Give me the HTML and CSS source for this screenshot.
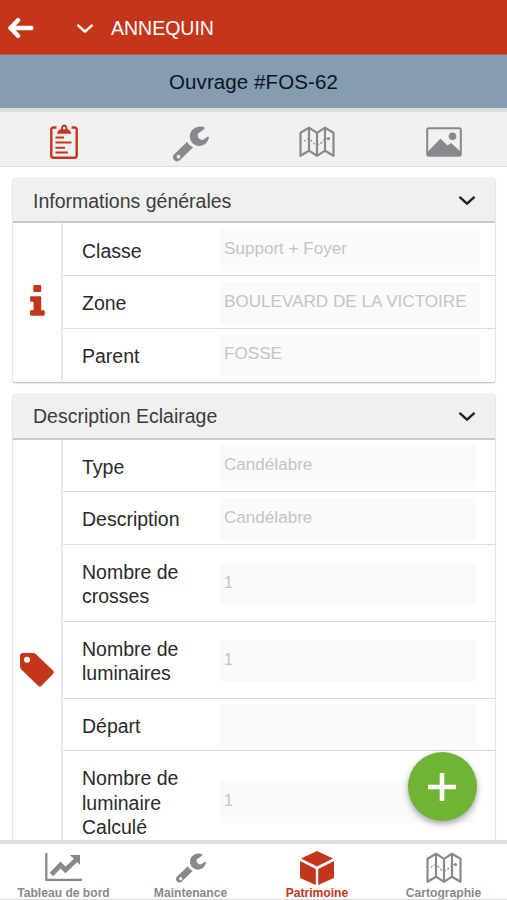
FILE: index.html
```html
<!DOCTYPE html>
<html lang="fr">
<head>
<meta charset="utf-8">
<title>Ouvrage #FOS-62</title>
<link rel="stylesheet" href="styles.css">
</head>
<body>
<svg class="defs" aria-hidden="true">
  <symbol id="chevron" viewBox="0 0 18 12"><path d="M1.5 1.800 9 8.700l7.500-6.900" fill="none" stroke="currentColor" stroke-width="2.500" stroke-linejoin="round"/></symbol>
  <symbol id="wrench" viewBox="0 0 36 36"><path fill="currentColor" fill-rule="evenodd" d="M31.500 1.200C25-1.200 16.800 2.800 16.800 10.300c0 5.500 4.200 9.700 9.700 9.700 4.500 0 8.200-3.400 9.500-8.200l-.8-1.500-5.500 3.600c-3.800-.4-5.400-2.600-4.900-6.200l6.700-4.700zM14.200 15.800 1 28.400c-1.600 1.600-1.500 4 .1 5.700s4.100 1.800 5.700.2l13.400-13c-2.800-1.100-4.900-2.900-6-5.500zM5.600 28.800a1.900 1.900 0 1 1-.1 3.800 1.900 1.900 0 0 1 .1-3.800z"/></symbol>
  <symbol id="map" viewBox="0 0 36 32"><g fill="none" stroke="currentColor"><path stroke-width="2.200" stroke-linejoin="round" d="M1.500 6.800 10 1.700l8 5.200 8-5.200 8.500 5.100v23L26 24.700l-8 5.200-8-5.200-8.500 5.100zM10 1.700v23M18 6.900v23M26 1.700v23"/><path stroke-width="1.100" stroke-dasharray="2.200 1.700" d="M5 15.500c3-4 6-3 8 0s6 4.500 9 1.500 3-4 7-4.500"/></g><circle cx="29.500" cy="12.500" r="1.600" fill="currentColor"/></symbol>
</svg>
<div class="app">
  <header class="topbar">
    <svg class="back" viewBox="0 0 26 20"><path d="M10 2.300 2.500 10l7.500 7.700M3 10h20.300" fill="none" stroke="currentColor" stroke-width="4.500" stroke-linecap="round" stroke-linejoin="round"/></svg>
    <svg class="chevron"><use href="#chevron"/></svg>
    <span>ANNEQUIN</span>
  </header>
  <h1 class="title">Ouvrage #FOS-62</h1>
  <nav class="tabs">
    <span class="tab active"><svg class="clip" viewBox="0 0 28 35"><path d="M6.500 3.500H3.600Q1.300 3.500 1.300 5.600v25.800q0 2.300 2.300 2.300h20.800q2.300 0 2.300-2.300V5.600q0-2.100-2.300-2.100h-2.900" fill="none" stroke="currentColor" stroke-width="2.400"/><path d="M7 9.800Q7.500 6 11 5.200C11-1 17.500-1 17.500 5.200 20.500 6 21 8 21.300 9.800zM14.200 2.800a1.300 1.300 0 1 0 .1 2.600 1.300 1.300 0 0 0-.1-2.600z" fill="currentColor" fill-rule="evenodd"/><path d="M5.500 13.500h8.500M5.500 18.500h16M5.500 23.700h9.500M5.500 28.400h12.500" stroke="currentColor" stroke-width="2"/></svg></span>
    <span class="tab"><svg class="wrench"><use href="#wrench"/></svg></span>
    <span class="tab"><svg class="map"><use href="#map"/></svg></span>
    <span class="tab"><svg class="photo" viewBox="0 0 36 30"><rect x="1.200" y="1.200" width="33.600" height="27.600" rx="1.500" fill="none" stroke="currentColor" stroke-width="2"/><circle cx="26.500" cy="9.200" r="3.800" fill="currentColor"/><path d="M2 24.500 14.500 11.500l7 7 3.500-2.500 9.500 8.500v4H2z" fill="currentColor"/></svg></span>
  </nav>
  <main class="content">
    <section class="card">
      <h2 class="card-head">Informations générales<svg class="chevron"><use href="#chevron"/></svg></h2>
      <div class="card-body general">
        <div class="side"><svg class="info" viewBox="0 0 15 31"><path d="M4.300 0h5.900q1 0 1 1v4.900q0 1-1 1H4.300q-1 0-1-1V1q0-1 1-1zM1.200 11.300H10.200q1 0 1 1v13h2.300q1.300 0 1.300 1.300v2.700q0 1.500-1.300 1.500H1.300Q0 30.800 0 29.300v-2.700q0-1.300 1.300-1.300h2.200v-8.500H1.200Q0 16.800 0 15.500v-2.900q0-1.300 1.200-1.300z" fill="currentColor"/></svg></div>
        <div class="rows">
          <div class="row"><span class="label">Classe</span><span class="value">Support + Foyer</span></div>
          <div class="row"><span class="label">Zone</span><span class="value">BOULEVARD DE LA VICTOIRE</span></div>
          <div class="row"><span class="label">Parent</span><span class="value">FOSSE</span></div>
        </div>
      </div>
    </section>
    <section class="card">
      <h2 class="card-head">Description Eclairage<svg class="chevron"><use href="#chevron"/></svg></h2>
      <div class="card-body lighting">
        <div class="side"><svg class="tag" viewBox="0 0 34 34"><path d="M3 0h10q1.500 0 3 1.300L33 17.500q1.600 1.700 0 3.400L21.500 32.700q-1.700 1.700-3.400 0L1.300 16.500Q0 15 0 13V3q0-3 3-3zM7 3.800a3 3 0 1 0 .1 6 3 3 0 0 0-.1-6z" fill="currentColor" fill-rule="evenodd"/></svg></div>
        <div class="rows">
          <div class="row"><span class="label">Type</span><span class="value">Candélabre</span></div>
          <div class="row"><span class="label">Description</span><span class="value">Candélabre</span></div>
          <div class="row"><span class="label">Nombre de crosses</span><span class="value number">1</span></div>
          <div class="row"><span class="label">Nombre de luminaires</span><span class="value number">1</span></div>
          <div class="row"><span class="label">Départ</span><span class="value"></span></div>
          <div class="row"><span class="label">Nombre de luminaire Calculé</span><span class="value number">1</span></div>
        </div>
      </div>
    </section>
    <button class="fab" aria-label="Ajouter"><svg viewBox="0 0 28 28"><path d="M14 0v28M0 14h28" stroke="currentColor" stroke-width="4.600"/></svg></button>
  </main>
  <nav class="bottombar">
    <span class="item"><svg class="chart" viewBox="0 0 37 29"><path d="M1.300 0v26.800H37" fill="none" stroke="currentColor" stroke-width="2.300"/><path d="M6.500 21.500 15.500 12l5 5L31 7" fill="none" stroke="currentColor" stroke-width="4.800"/><path d="M25 2H35v10z" fill="currentColor"/></svg><b>Tableau de bord</b></span>
    <span class="item"><svg class="wrench"><use href="#wrench"/></svg><b>Maintenance</b></span>
    <span class="item active"><svg class="cube" viewBox="0 0 34 34"><path d="M17 0 33 7.500 17 15.500 1 7.500zM0 10l15.800 8v16L0 27zM34 10l-15.800 8v16L34 27z" fill="currentColor"/></svg><b>Patrimoine</b></span>
    <span class="item"><svg class="map"><use href="#map"/></svg><b>Cartographie</b></span>
  </nav>
</div>
</body>
</html>
```
FILE: styles.css
```css
* { box-sizing: border-box; }
body {
  margin: 0;
  font-family: "Liberation Sans", Arial, sans-serif;
  font-size: 19.5px;
  color: #2a2a2a;
  background: #fff;
}
svg { display: block; flex: none; }
.defs { position: absolute; width: 0; height: 0; }
.app {
  height: 900px;
  display: flex;
  flex-direction: column;
  overflow: hidden;
}
.topbar {
  flex: none;
  height: 55px;
  padding: 2px 0 0 8px;
  display: flex;
  align-items: center;
  background: #c4361c;
  border-bottom: 1px solid #9c6658;
  color: #fff;
}
.back { width: 26px; height: 20px; margin-right: 41px; }
.chevron { width: 18px; height: 12px; }
.topbar .chevron { margin: 1px 17px 0 1px; }
.title {
  flex: none;
  height: 53px;
  margin: 0;
  font-size: 20.5px;
  font-weight: 400;
  line-height: 54px;
  letter-spacing: .1px;
  text-align: center;
  color: #0c151d;
  background: #869cb1;
}
.tabs {
  flex: none;
  height: 59px;
  display: grid;
  grid-template-columns: 127px 127px 126px 127px;
  background: #f1f1f1;
  border-top: 4px solid #dcdcdc;
  border-bottom: 1px solid #dedede;
  color: #88898d;
}
.tab { display: flex; justify-content: center; padding-top: 14px; }
.active { color: #c4361c; }
.clip { width: 28px; height: 35px; margin-top: -2px; }
.wrench { width: 36px; height: 36px; }
.map { width: 36px; height: 32px; }
.photo { width: 36px; height: 30px; margin-top: 1px; }
.content {
  position: relative;
  flex: 1;
  min-height: 0;
  overflow: hidden;
  padding: 11px 12px 0 13px;
}
.card {
  margin-bottom: 12px;
  border-radius: 2px;
  background: #fff;
  box-shadow: 0 1px 2px rgba(0, 0, 0, .28), 0 0 2px rgba(0, 0, 0, .12);
}
.card-head {
  height: 45px;
  margin: 0;
  padding: 3px 19px 0 20px;
  display: flex;
  align-items: center;
  justify-content: space-between;
  font-size: 19.5px;
  font-weight: 400;
  color: #3c3c3e;
  background: #f0f0f0;
  border-bottom: 2px solid #cacaca;
}
.card + .card .card-head { height: 46px; padding-top: 1px; }
.card-head .chevron { color: #222; }
.card-body { display: flex; }
.general { height: 159px; }
.general .rows { padding-top: .5px; }
.lighting { height: 460px; }
.side {
  width: 50px;
  flex: none;
  display: flex;
  align-items: center;
  justify-content: center;
  border-right: 2px solid #e8e8e8;
  color: #c4361c;
}
.info { width: 15px; height: 31px; margin-top: -4px; }
.tag { width: 34px; height: 34px; }
.rows { flex: 1; }
.lighting .rows { margin-top: -.5px; }
.row {
  display: flex;
  align-items: center;
  padding: 0 15px 0 19px;
  border-bottom: 1px solid #dcdcdc;
}
.general .row:last-child { border-bottom: 0; }
.lighting .row { padding-right: 19px; }
.label {
  width: 138px;
  flex: none;
  padding: 15px 28px 12px 0;
  line-height: 24.5px;
}
.value {
  flex: 1;
  height: 42px;
  margin-top: 2px;
  padding-left: 4px;
  font-size: 17.1px;
  line-height: 40px;
  white-space: nowrap;
  color: #c4c4c4;
  background: #fafafa;
}
.number { font-size: 16px; }
.fab {
  position: absolute;
  right: 30.5px;
  bottom: 19px;
  width: 69px;
  height: 69px;
  padding: 0;
  display: flex;
  align-items: center;
  justify-content: center;
  border: 0;
  border-radius: 50%;
  color: #fff;
  background: #70b433;
  box-shadow: 0 3px 6px rgba(0, 0, 0, .35);
}
.fab svg { width: 28px; height: 28px; }
.bottombar {
  flex: none;
  height: 60px;
  display: grid;
  grid-template-columns: 127px 127px 126px 127px;
  overflow: hidden;
  border-top: 4px solid #dedede;
  border-bottom: 1px solid #dadada;
  color: #88898d;
}
.item {
  height: 60px;
  padding-top: 2.5px;
  display: grid;
  grid-template-rows: 42px 9px;
  align-content: start;
  justify-items: center;
  align-items: center;
}
.item b { font-size: 12.1px; line-height: 9px; white-space: nowrap; }
.item.active { color: #c4361c; }
.chart { width: 37px; height: 29px; }
.bottombar .wrench { width: 30px; height: 30px; }
.cube { width: 34px; height: 34px; }
```
